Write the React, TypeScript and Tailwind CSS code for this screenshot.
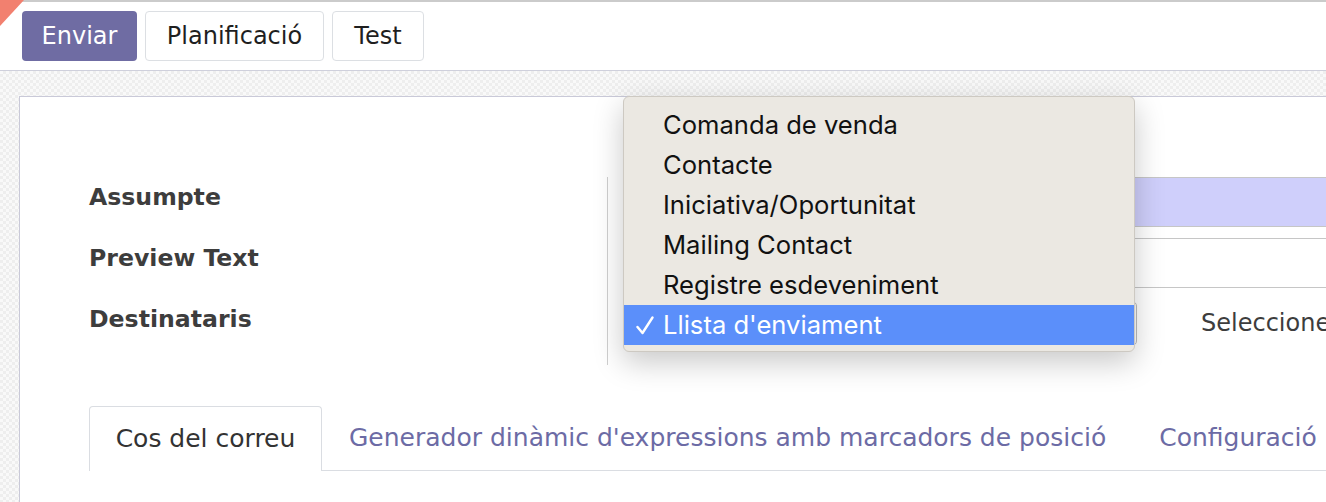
const ui = '[font-family:"DejaVu_Sans",sans-serif]';

const options = [
  'Comanda de venda',
  'Contacte',
  'Iniciativa/Oportunitat',
  'Mailing Contact',
  'Registre esdeveniment',
  "Llista d'enviament",
];

export default function App() {
  return (
    <div className={`relative w-[1326px] h-[502px] overflow-hidden bg-white ${ui}`}>
      {/* ribbon corner */}
      <svg className="absolute left-0 top-0" width="26" height="28" viewBox="0 0 26 28">
        <polygon points="0,0 24,0 0,26" fill="#f2806f" />
      </svg>

      {/* control panel */}
      <div className="h-[71px] border-t-2 border-b border-t-[#cbcbcb] border-b-[#cfd0dc] flex items-start gap-2 pl-[22px] pt-[9px]">
        <button className="w-[115px] h-[50px] rounded-[4px] bg-[#6f6ca3] text-white text-[24px]">Enviar</button>
        <button className="w-[179px] h-[50px] rounded-[4px] border border-[#dcdfe3] text-[#1f1f1f] text-[24px]">Planificació</button>
        <button className="w-[92px] h-[50px] rounded-[4px] border border-[#dcdfe3] text-[#1f1f1f] text-[24px]">Test</button>
      </div>

      {/* sheet background */}
      <div className="h-[431px] pl-[19px] pt-[25px] bg-[repeating-conic-gradient(#eeeeee_0%_25%,#f9f9f9_0%_50%)] bg-[length:6px_6px]">
        <div className="h-full bg-white border-l border-t border-[#c9c9d8] pl-[69px] pt-[70px]">
          <div className="flex">
            {/* labels */}
            <div className="w-[518px] shrink-0 flex flex-col">
              {['Assumpte', 'Preview Text', 'Destinataris'].map((l) => (
                <div key={l} className="h-[61px] flex items-center font-bold text-[23.6px] text-[#3d3d3d]">
                  {l}
                </div>
              ))}
            </div>
            <div className="mt-[10px] w-px h-[188px] shrink-0 bg-[#cfcfcf]" />
            {/* fields */}
            <div className="flex-1 min-w-0 mt-[10px] pl-[24px] flex flex-col">
              <div className="h-[50px] border-y border-[#c6c6c6] bg-[#cfcffb]" />
              <div className="mt-[11px] h-[50px] border-y border-[#c6c6c6]" />
              <div className="mt-[11px] h-[48px] flex items-center">
                <div className="w-[505px] shrink-0 h-[45px] rounded-[5px] border border-[#bdbdbd]" />
                <span className="ml-[64px] text-[24px] text-[#3d3d3d] whitespace-nowrap">Seleccione...</span>
              </div>
            </div>
          </div>

          {/* notebook tabs */}
          <div className="mt-[41px] flex h-[65px] text-[25px] whitespace-nowrap">
            <div className="w-[233px] shrink-0 flex items-center justify-center rounded-t-[4px] border-x border-t border-[#dadde2] text-[#333]">
              Cos del correu
            </div>
            <div className="flex-1 flex items-center gap-[53px] pl-[27px] border-b border-[#dadde2] text-[#6c6ba5]">
              <span>Generador dinàmic d'expressions amb marcadors de posició</span>
              <span>Configuració</span>
            </div>
          </div>
        </div>
      </div>

      {/* native select popup */}
      <div className="absolute left-[623px] top-[96px] w-[512px] h-[256px] rounded-[6px] bg-[#ebe8e2] border border-[#cdc9c2] shadow-[0_10px_30px_rgba(0,0,0,0.22)] py-[8px] [font-family:Inter,sans-serif] text-[25.6px] text-[#111]">
        {options.map((o, i) => {
          const on = i === options.length - 1;
          return (
            <div
              key={o}
              className={`relative h-[40px] flex items-center pl-[39px] ${on ? 'bg-[#5b8ffa] text-white' : ''}`}
            >
              {on && (
                <svg className="absolute left-[12px] top-[11px]" width="18" height="19" viewBox="0 0 18 19">
                  <polyline points="1.5,11 6.5,17 16.5,1.5" fill="none" stroke="white" strokeWidth="2.4" strokeLinecap="round" strokeLinejoin="round" />
                </svg>
              )}
              {o}
            </div>
          );
        })}
      </div>
    </div>
  );
}
